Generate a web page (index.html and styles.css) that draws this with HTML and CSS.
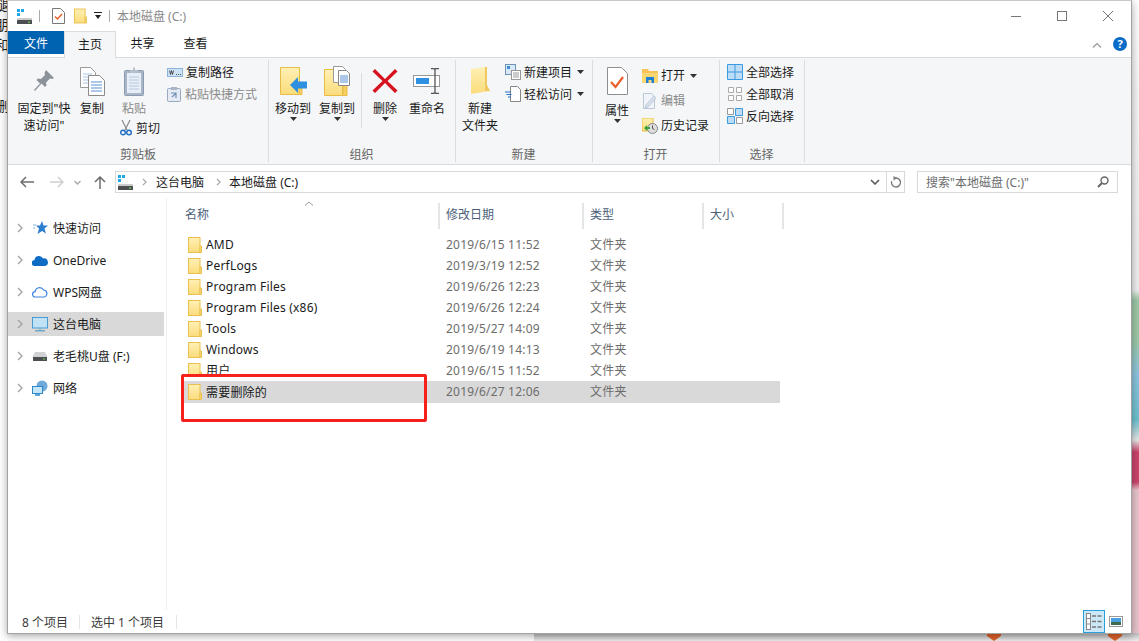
FILE: index.html
```html
<!DOCTYPE html>
<html lang="zh-CN">
<head>
    <meta charset="UTF-8">
    <title>本地磁盘 (C:)</title>
    <link rel="stylesheet" href="styles.css">
</head>
<body>
    <!-- shared icons -->
    <svg class="defs" width="0" height="0">
        <defs>
            <linearGradient id="fold" x1="0" y1="0" x2="0" y2="1">
                <stop offset="0" stop-color="#fff0b4"/>
                <stop offset="1" stop-color="#fbdc7c"/>
            </linearGradient>
            <symbol id="folder" viewBox="0 0 14 16">
                <rect x=".5" y=".5" width="11.5" height="15" fill="url(#fold)" stroke="#eac14f"/>
                <path d="M12 9h1.5v6.500H12z" fill="#fbe08a" stroke="#eac14f"/>
            </symbol>
            <symbol id="drive" viewBox="0 0 16 15">
                <path d="M1 0h3v3H1zM5 0h3v3H5zM1 4h3v3H1z" fill="#1ea7e8"/>
                <path d="M2 9h13l1 3v3H1v-3z" fill="#4b4f52"/>
                <path d="M2 9h13l.6 2H1.400z" fill="#c9cbcc"/>
                <path d="M12 12.500h2v1.200h-2z" fill="#6ed04c"/>
            </symbol>
            <symbol id="caret" viewBox="0 0 7 4">
                <path d="M0 0h7L3.500 4z" fill="#333"/>
            </symbol>
            <symbol id="chev" viewBox="0 0 6 10">
                <path d="M1 1l4 4-4 4" fill="none" stroke="#a6a6a6" stroke-width="1.500"/>
            </symbol>
        </defs>
    </svg>

    <!-- what shows behind the window -->
    <div class="behind-left">
        <span>腿</span>
        <span>朋</span>
        <span>和</span>
        <span class="low">删</span>
    </div>
    <div class="behind-right"></div>
    <div class="behind-bottom">
        <svg class="badge badge-a" width="14" height="8" viewBox="0 0 14 8"><path d="M0 0h14v3L7 8 0 3z" fill="#e0622a"/></svg>
        <svg class="badge badge-b" width="14" height="8" viewBox="0 0 14 8"><path d="M0 0h14v3L7 8 0 3z" fill="#e0622a"/></svg>
    </div>

    <div class="window">
        <!-- title bar -->
        <div class="titlebar">
            <svg class="t-drive" width="16" height="15"><use href="#drive"/></svg>
            <span class="t-sep"></span>
            <svg class="t-doc" width="13" height="16" viewBox="0 0 13 16">
                <path d="M.5.5h8l4 4v11H.5z" fill="#fff" stroke="#777"/>
                <path d="M3 8.500l2.500 2.500L10 6" fill="none" stroke="#e8602c" stroke-width="1.500"/>
            </svg>
            <svg class="t-folder" width="13" height="16"><use href="#folder"/></svg>
            <svg class="t-caret" width="8" height="8" viewBox="0 0 8 8">
                <path d="M0 0h8v1H0zM1 3h6L4 7z" fill="#222"/>
            </svg>
            <span class="t-sep t-sep2"></span>
            <span class="t-title">本地磁盘 (C:)</span>
            <div class="win-btns">
                <svg width="10" height="10" viewBox="0 0 10 10"><path d="M0 5.500h10" stroke="#777"/></svg>
                <svg width="10" height="10" viewBox="0 0 10 10"><rect x=".5" y=".5" width="9" height="9" fill="none" stroke="#777"/></svg>
                <svg width="10" height="10" viewBox="0 0 10 10"><path d="M0 0l10 10M10 0L0 10" stroke="#777"/></svg>
            </div>
        </div>

        <!-- tabs -->
        <div class="tabs">
            <div class="tab tab-file">文件</div>
            <div class="tab tab-on">主页</div>
            <div class="tab">共享</div>
            <div class="tab">查看</div>
            <svg class="collapse" width="10" height="6" viewBox="0 0 10 6"><path d="M1 5.500l4-4 4 4" fill="none" stroke="#999" stroke-width="1.200"/></svg>
            <div class="help">?</div>
        </div>

        <!-- ribbon -->
        <div class="ribbon">
            <div class="group g-clip">
                <div class="group-body">
                    <div class="big w-pin">
                        <div class="big-icon">
                            <svg width="22" height="24" viewBox="0 0 22 24"><path d="M13 1l8 8-2 1-2-.500-4 4 .5 3-1.500 1.500-3.500-3.500L2 22l-1-1 6-6.500L3.500 11 5 9.500l3 .5 4-4-.5-2z" fill="#8b929a"/></svg>
                        </div>
                        <span>固定到"快<br>速访问"</span>
                    </div>
                    <div class="big w-copy">
                        <div class="big-icon">
                            <svg width="25" height="29" viewBox="0 0 25 29">
                                <path d="M.5.500h10l5 5v15H.5z" fill="#fff" stroke="#9a9a9a"/>
                                <path d="M3 7h9M3 10h9M3 13h9M3 16h9" stroke="#a9c4e6"/>
                                <path d="M8.500 8.500h11l5 5v15h-16z" fill="#fff" stroke="#8a8a8a"/>
                                <path d="M11 15h11M11 18h11M11 21h11M11 24h11" stroke="#5b8fd6"/>
                            </svg>
                        </div>
                        <span>复制</span>
                    </div>
                    <div class="paste-col">
                        <div class="big w-paste muted">
                            <div class="big-icon">
                                <svg width="20" height="29" viewBox="0 0 20 29">
                                    <rect x=".5" y="3.500" width="19" height="25" rx="1" fill="#a9b6c8" stroke="#8c9ab0"/>
                                    <rect x="3" y="6" width="14" height="20" fill="#e8eef7"/>
                                    <path d="M5 10h10M5 13h10M5 16h10M5 19h10M5 22h10" stroke="#b8c8de"/>
                                    <path d="M6 6V3h3V.5h2V3h3v3z" fill="#b5bfcc"/>
                                </svg>
                            </div>
                            <span>粘贴</span>
                        </div>
                        <div class="small cut">
                            <svg width="12" height="16" viewBox="0 0 12 16">
                                <path d="M2 0l5 10M10 0L5 10" stroke="#8a8a8a" stroke-width="1.200"/>
                                <circle cx="3" cy="12.500" r="2.300" fill="none" stroke="#1f6fc4" stroke-width="1.400"/>
                                <circle cx="9" cy="12.500" r="2.300" fill="none" stroke="#1f6fc4" stroke-width="1.400"/>
                            </svg>
                            <span>剪切</span>
                        </div>
                    </div>
                    <div class="small-col col-clip">
                        <div class="small">
                            <svg width="16" height="9" viewBox="0 0 16 9"><rect x=".5" y=".5" width="15" height="8" fill="#cfe3f7" stroke="#8db4dc"/><path d="M2.500 2.500l1 4 1-4 1 4 1-4M9 6.500h1M11 6.500h1M13 6.500h1" fill="none" stroke="#333" stroke-width=".8"/></svg>
                            <span>复制路径</span>
                        </div>
                        <div class="small muted">
                            <svg width="14" height="16" viewBox="0 0 14 16"><rect x=".5" y="2.500" width="13" height="13" rx="1" fill="#e4ebf4" stroke="#9aa9bd"/><path d="M4 1h6v3H4z" fill="#aab6c6"/><path d="M5 12V7h5M5 7l4 4" fill="none" stroke="#6f8fb5" stroke-width="1.200" transform="rotate(90 7 9)"/></svg>
                            <span class="gap-wide">粘贴快捷方式</span>
                        </div>
                    </div>
                </div>
                <div class="group-label">剪贴板</div>
            </div>

            <div class="group g-org">
                <div class="group-body">
                    <div class="big w-move">
                        <div class="big-icon">
                            <svg width="27" height="28" viewBox="0 0 27 28">
                                <path d="M.5.500h19v27H.5z" fill="url(#fold)" stroke="#e8bd45"/>
                                <path d="M19 16h3v11.500h-3z" fill="#f5cf63" stroke="#e8bd45"/>
                                <path d="M10 18l8-8v4.500h9v7h-9V26z" fill="#2f8fe0"/>
                            </svg>
                        </div>
                        <span>移动到</span>
                        <svg class="drop" width="7" height="4"><use href="#caret"/></svg>
                    </div>
                    <div class="big w-move">
                        <div class="big-icon">
                            <svg width="26" height="30" viewBox="0 0 26 30">
                                <path d="M.5 3.500h18v26H.5z" fill="url(#fold)" stroke="#e8bd45"/>
                                <path d="M19 18h4v11.500h-4z" fill="#f5cf63" stroke="#e8bd45"/>
                                <path d="M9.500.5h9l3 3v13h-12z" fill="#fff" stroke="#999"/>
                                <path d="M14.500 4.500h8l3 3v12h-11z" fill="#fff" stroke="#888"/>
                                <path d="M16 10h8M16 12h8M16 14h8M16 16h8" stroke="#5b8fd6"/>
                            </svg>
                        </div>
                        <span>复制到</span>
                        <svg class="drop" width="7" height="4"><use href="#caret"/></svg>
                    </div>
                    <span class="inner-sep"></span>
                    <div class="big w-del">
                        <div class="big-icon">
                            <svg width="26" height="26" viewBox="0 0 26 26"><path d="M3 1l10 10L23 1l2.500 2.500-10 9.500 10 9.500L23 25 13 15 3 25 .5 22.500l10-9.500-10-9.500z" fill="#d5121e"/></svg>
                        </div>
                        <span>删除</span>
                        <svg class="drop" width="7" height="4"><use href="#caret"/></svg>
                    </div>
                    <div class="big w-ren">
                        <div class="big-icon">
                            <svg width="28" height="26" viewBox="0 0 28 26">
                                <rect x=".5" y="7.500" width="26" height="11" fill="#fff" stroke="#999"/>
                                <rect x="3" y="10" width="13" height="6" fill="#2f8fe0"/>
                                <path d="M18 .5h3l1 1 1-1h3M18 25.500h3l1-1 1 1h3M22 1.500v23" fill="none" stroke="#555" stroke-width="1.300"/>
                            </svg>
                        </div>
                        <span>重命名</span>
                    </div>
                </div>
                <div class="group-label">组织</div>
            </div>

            <div class="group g-new">
                <div class="group-body">
                    <div class="big w-newf">
                        <div class="big-icon">
                            <svg width="19" height="28" viewBox="0 0 19 28"><path d="M0 2l15-2v18l4 6-4 .5L0 27z" fill="url(#fold)"/><path d="M14 0h2v18l3 6h-5z" fill="#eec95f"/></svg>
                        </div>
                        <span>新建<br>文件夹</span>
                    </div>
                    <div class="small-col col-new">
                        <div class="small">
                            <svg width="16" height="16" viewBox="0 0 16 16"><rect x=".5" y=".5" width="10" height="10" fill="#d9e8f6" stroke="#6f93b5"/><rect x="2" y="2" width="3" height="3" fill="#3d8ed8"/><rect x="6.500" y="6.500" width="9" height="9" fill="#fff" stroke="#999"/><path d="M8 9h6M8 11h6M8 13h6" stroke="#9a9a9a"/></svg>
                            <span>新建项目</span>
                            <svg class="small-caret" width="7" height="4"><use href="#caret"/></svg>
                        </div>
                        <div class="small">
                            <svg width="16" height="16" viewBox="0 0 16 16"><path d="M5.500.5h7l3 3v12h-10z" fill="#fff" stroke="#888"/><path d="M0 6h6M1.500 8.500h5M3 11h3" stroke="#1f6fc4" stroke-width="1.100"/></svg>
                            <span>轻松访问</span>
                            <svg class="small-caret" width="7" height="4"><use href="#caret"/></svg>
                        </div>
                    </div>
                </div>
                <div class="group-label">新建</div>
            </div>

            <div class="group g-open">
                <div class="group-body">
                    <div class="big w-prop">
                        <div class="big-icon">
                            <svg width="21" height="28" viewBox="0 0 21 28"><path d="M.5.500h14l6 6v21H.5z" fill="#fff" stroke="#8e8e8e"/><path d="M4 15l4.500 5L16 10" fill="none" stroke="#e8602c" stroke-width="2.200"/></svg>
                        </div>
                        <span>属性</span>
                        <svg class="drop" width="7" height="4"><use href="#caret"/></svg>
                    </div>
                    <div class="small-col col-open">
                        <div class="small">
                            <svg width="16" height="14" viewBox="0 0 16 14"><path d="M0 0h6l1 2h9v12H0z" fill="#f7c35a"/><path d="M0 4h16v10H0z" fill="#fbd773"/><path d="M4 14V8h8v6h-2.500v-3h-3v3z" fill="#1f7fd4"/></svg>
                            <span>打开</span>
                            <svg class="small-caret" width="7" height="4"><use href="#caret"/></svg>
                        </div>
                        <div class="small muted">
                            <svg width="16" height="16" viewBox="0 0 16 16"><path d="M1.500.5h8l3 3v12h-11z" fill="#f1f4f9" stroke="#bcc8d8"/><path d="M4 12l8-9 2 2-8 9-3 1z" fill="#d7e1ee" stroke="#aebcd0" stroke-width=".7"/></svg>
                            <span>编辑</span>
                        </div>
                        <div class="small">
                            <svg width="16" height="16" viewBox="0 0 16 16"><path d="M0 0h11v13H0z" fill="url(#fold)" stroke="#e8bd45"/><circle cx="10.500" cy="10.500" r="5" fill="#ddd" stroke="#888"/><path d="M10.500 7.500v3l2 1" fill="none" stroke="#555"/><path d="M2 10l3-3v2h3v2H5v2z" fill="#3aa33a"/></svg>
                            <span>历史记录</span>
                        </div>
                    </div>
                </div>
                <div class="group-label">打开</div>
            </div>

            <div class="group g-sel">
                <div class="group-body">
                    <div class="small-col col-sel">
                        <div class="small">
                            <svg width="16" height="16" viewBox="0 0 16 16"><path d="M.5.5h15v15H.5z" fill="#bcdcf7" stroke="#3b9ae0"/><path d="M8 0v16M0 8h16" stroke="#3b9ae0"/></svg>
                            <span>全部选择</span>
                        </div>
                        <div class="small">
                            <svg width="14" height="14" viewBox="0 0 14 14"><path d="M.5.5h5v5h-5zM8.500.5h5v5h-5zM.5 8.500h5v5h-5zM8.500 8.500h5v5h-5z" fill="#fff" stroke="#aaa"/></svg>
                            <span>全部取消</span>
                        </div>
                        <div class="small">
                            <svg width="16" height="16" viewBox="0 0 16 16"><path d="M.5.5h6v6h-6zM9.500 9.500h6v6h-6z" fill="#fff" stroke="#999"/><path d="M8.500.5h7v7h-7zM.5 8.500h7v7h-7z" fill="#bcdcf7" stroke="#3b9ae0"/></svg>
                            <span>反向选择</span>
                        </div>
                    </div>
                </div>
                <div class="group-label">选择</div>
            </div>
        </div>

        <!-- address bar -->
        <div class="addressbar">
            <div class="nav-btns">
                <svg width="14" height="12" viewBox="0 0 14 12"><path d="M6 1L1 6l5 5M1 6h13" fill="none" stroke="#6d6d6d" stroke-width="1.500"/></svg>
                <svg width="14" height="12" viewBox="0 0 14 12"><path d="M8 1l5 5-5 5M13 6H0" fill="none" stroke="#cfcfcf" stroke-width="1.500"/></svg>
                <svg width="7" height="5" viewBox="0 0 7 5"><path d="M.5 1l3 3 3-3" fill="none" stroke="#a6a6a6" stroke-width="1.300"/></svg>
                <svg width="12" height="13" viewBox="0 0 12 13"><path d="M1 6l5-5 5 5M6 1v12" fill="none" stroke="#6d6d6d" stroke-width="1.500"/></svg>
            </div>
            <div class="address">
                <svg class="a-drive" width="16" height="15"><use href="#drive"/></svg>
                <svg class="a-chev" width="5" height="8"><use href="#chev"/></svg>
                <span>这台电脑</span>
                <svg class="a-chev" width="5" height="8"><use href="#chev"/></svg>
                <span>本地磁盘 (C:)</span>
                <svg class="a-down" width="10" height="6" viewBox="0 0 10 6"><path d="M1 1l4 4 4-4" fill="none" stroke="#555" stroke-width="1.500"/></svg>
                <div class="a-refresh">
                    <svg width="11" height="12" viewBox="0 0 11 12"><path d="M6 2a4.500 4.500 0 1 1-4.300 3.200" fill="none" stroke="#777" stroke-width="1.300"/><path d="M3.500 0L7 2 3.500 4.500z" fill="#777"/></svg>
                </div>
            </div>
            <div class="search">
                <span>搜索"本地磁盘 (C:)"</span>
                <svg width="12" height="12" viewBox="0 0 12 12"><circle cx="7.500" cy="4.500" r="3.500" fill="none" stroke="#666" stroke-width="1.400"/><path d="M5 7l-4 4" stroke="#666" stroke-width="2"/></svg>
            </div>
        </div>

        <!-- main -->
        <div class="main">
            <div class="navpane">
                <div class="nav-item">
                    <svg class="n-chev" width="6" height="10"><use href="#chev"/></svg>
                    <span class="n-icon"><svg width="15" height="14" viewBox="0 0 15 14"><path d="M9 0l1.500 4.500H15l-3.500 3 1.500 5L9 10l-4.500 3 1.500-5.500-3-3h4z" fill="#2f7fd0"/><path d="M0 4h3M0 7h2" stroke="#7fb2e6"/></svg></span>
                    <span>快速访问</span>
                </div>
                <div class="nav-item">
                    <svg class="n-chev" width="6" height="10"><use href="#chev"/></svg>
                    <span class="n-icon"><svg width="16" height="11" viewBox="0 0 16 11"><path d="M3 11a3 3 0 0 1-.5-6A4.500 4.500 0 0 1 11 3.500 3.800 3.800 0 0 1 13 11z" fill="#0f6cc4"/></svg></span>
                    <span>OneDrive</span>
                </div>
                <div class="nav-item">
                    <svg class="n-chev" width="6" height="10"><use href="#chev"/></svg>
                    <span class="n-icon"><svg width="16" height="12" viewBox="0 0 16 12"><path d="M3.500 11a2.700 2.700 0 0 1-.4-5.400A4.500 4.500 0 0 1 11.500 4 3.600 3.600 0 0 1 12.500 11z" fill="none" stroke="#3f83e0" stroke-width="1.200"/></svg></span>
                    <span>WPS网盘</span>
                </div>
                <div class="nav-item nav-on">
                    <svg class="n-chev" width="6" height="10"><use href="#chev"/></svg>
                    <span class="n-icon"><svg width="16" height="15" viewBox="0 0 16 15"><rect x=".5" y=".5" width="15" height="10.500" fill="#bfe2f7" stroke="#4a9bd1"/><path d="M3 13h10v1.500H3z" fill="#6fa8cc"/><path d="M7 11h2v2H7z" fill="#8fb8d2"/></svg></span>
                    <span>这台电脑</span>
                </div>
                <div class="nav-item">
                    <svg class="n-chev" width="6" height="10"><use href="#chev"/></svg>
                    <span class="n-icon"><svg width="14" height="9" viewBox="0 0 14 9"><path d="M2 0h10l2 4v5H0V4z" fill="#d0d2d3"/><path d="M0 5h14v4H0z" fill="#4b4f52"/><path d="M10 6.500h2v1h-2z" fill="#6ed04c"/></svg></span>
                    <span>老毛桃U盘 (F:)</span>
                </div>
                <div class="nav-item">
                    <svg class="n-chev" width="6" height="10"><use href="#chev"/></svg>
                    <span class="n-icon"><svg width="16" height="16" viewBox="0 0 16 16"><circle cx="10" cy="6" r="5.500" fill="#6fa9d8"/><rect x=".5" y="6.500" width="10" height="7" fill="#c6e6fa" stroke="#2f86c9"/><path d="M3 15h5" stroke="#2f86c9" stroke-width="1.500"/></svg></span>
                    <span>网络</span>
                </div>
            </div>

            <div class="files">
                <svg class="sort" width="10" height="5" viewBox="0 0 10 5"><path d="M1 4.500l4-3.500 4 3.500" fill="none" stroke="#999"/></svg>
                <div class="file-head">
                    <div>名称</div>
                    <div>修改日期</div>
                    <div>类型</div>
                    <div>大小</div>
                </div>
                <div class="file-row">
                    <div class="f-name"><svg width="14" height="16"><use href="#folder"/></svg>AMD</div>
                    <div>2019/6/15 11:52</div><div>文件夹</div>
                </div>
                <div class="file-row">
                    <div class="f-name"><svg width="14" height="16"><use href="#folder"/></svg>PerfLogs</div>
                    <div>2019/3/19 12:52</div><div>文件夹</div>
                </div>
                <div class="file-row">
                    <div class="f-name"><svg width="14" height="16"><use href="#folder"/></svg>Program Files</div>
                    <div>2019/6/26 12:23</div><div>文件夹</div>
                </div>
                <div class="file-row">
                    <div class="f-name"><svg width="14" height="16"><use href="#folder"/></svg>Program Files (x86)</div>
                    <div>2019/6/26 12:24</div><div>文件夹</div>
                </div>
                <div class="file-row">
                    <div class="f-name"><svg width="14" height="16"><use href="#folder"/></svg>Tools</div>
                    <div>2019/5/27 14:09</div><div>文件夹</div>
                </div>
                <div class="file-row">
                    <div class="f-name"><svg width="14" height="16"><use href="#folder"/></svg>Windows</div>
                    <div>2019/6/19 14:13</div><div>文件夹</div>
                </div>
                <div class="file-row">
                    <div class="f-name"><svg width="14" height="16"><use href="#folder"/></svg>用户</div>
                    <div>2019/6/15 11:52</div><div>文件夹</div>
                </div>
                <div class="file-row file-on">
                    <div class="f-name"><svg width="14" height="16"><use href="#folder"/></svg>需要删除的</div>
                    <div>2019/6/27 12:06</div><div>文件夹</div>
                </div>
                <!-- red mark someone drew on the screenshot -->
                <div class="redbox"></div>
            </div>
        </div>

        <!-- status bar -->
        <div class="statusbar">
            <span class="st-count">8 个项目</span>
            <span class="st-sep"></span>
            <span class="st-sel">选中 1 个项目</span>
            <span class="st-sep"></span>
            <div class="views">
                <div class="view view-on">
                    <svg width="16" height="17" viewBox="0 0 16 17"><rect x=".5" y=".5" width="4" height="16" fill="#fff" stroke="#888"/><path d="M1 5.500h3M1 11h3" stroke="#888"/><path d="M6 3h4M11.500 3h4M6 8.500h4M11.500 8.500h4M6 14h4M11.500 14h4" stroke="#777" stroke-width="1.300"/></svg>
                </div>
                <div class="view">
                    <svg width="14" height="11" viewBox="0 0 14 11"><rect x=".5" y=".5" width="13" height="10" fill="#fff" stroke="#999"/><rect x="2" y="2" width="10" height="4" fill="#4a9fe0"/><rect x="2" y="6" width="10" height="3" fill="#3d6b4e"/></svg>
                </div>
            </div>
        </div>
    </div>
</body>
</html>
```

FILE: styles.css
```css
html, body {
    margin: 0;
    height: 641px;
    overflow: hidden;
    background: #fff;
    font-family: "Noto Sans", "Noto Sans CJK SC", sans-serif;
    font-size: 12px;
    color: #1a1a1a;
}
svg { display: block; flex: none; }
.defs { position: absolute; }

/* stuff behind the window */
.behind-left {
    position: absolute;
    left: -5px;
    top: -6px;
    width: 13px;
    overflow: hidden;
    font-family: "Noto Sans CJK SC", sans-serif;
    font-size: 14px;
    line-height: 20px;
    color: #222;
}
.behind-left span { display: block; }
.behind-left .low { margin-top: 41px; }
.behind-right {
    position: absolute;
    left: 1131px;
    top: 0;
    width: 8px;
    height: 641px;
    background: linear-gradient(#fff 0, #f4f4f4 100px, #eee 290px, #9cc8a6 300px, #9cc8a6 340px, #8cc4e0 375px, #6cc0cc 420px, #e6e6e6 440px, #c9446a 452px, #c9446a 482px, #e8c4cc 490px, #e8c4cc 641px);
}
.behind-bottom {
    position: absolute;
    left: 534px;
    top: 633px;
    width: 605px;
    height: 8px;
    background: linear-gradient(#bdbdbd, #ececec);
}
.badge { position: absolute; top: 0; }
.badge-a { left: 453px; }
.badge-b { left: 574px; }

/* window */
.window {
    position: absolute;
    left: 7px;
    top: 0;
    width: 1123px;
    height: 632px;
    display: flex;
    flex-direction: column;
    background: #fff;
    border: 1px solid #a3a3a3;
    border-top-color: #c8c8c8;
    box-shadow: 0 2px 8px rgba(0, 0, 0, .35);
}

.titlebar {
    height: 30px;
    flex: none;
    display: flex;
    align-items: center;
    padding-left: 8px;
}
.t-sep {
    width: 1px;
    height: 12px;
    background: #aaa;
    margin-left: 7px;
}
.t-doc { margin-left: 12px; }
.t-folder { margin-left: 9px; }
.t-caret { margin-left: 7px; }
.t-sep2 { margin-left: 7px; }
.t-title {
    margin-left: 7px;
    color: #8a8a8a;
}
.win-btns {
    margin-left: auto;
    display: flex;
    gap: 36px;
    padding-right: 18px;
}

.tabs {
    height: 26px;
    flex: none;
    display: flex;
    position: relative;
}
.tab {
    width: 53px;
    height: 23px;
    line-height: 25px;
    text-align: center;
}
.tab-file {
    width: 56px;
    background: #0063b1;
    color: #fff;
}
.tab-on {
    width: 52px;
    height: 27px;
    margin-bottom: -1px;
    background: #f5f6f7;
    border: 1px solid #dadbdc;
    border-bottom: 0;
    box-sizing: border-box;
    position: relative;
    z-index: 1;
}
.collapse {
    position: absolute;
    left: 1084px;
    top: 11px;
}
.help {
    position: absolute;
    left: 1105px;
    top: 6px;
    width: 14px;
    height: 14px;
    border-radius: 50%;
    background: #0a6cc7;
    color: #fff;
    font-size: 11px;
    font-weight: bold;
    line-height: 14px;
    text-align: center;
}

/* ribbon */
.ribbon {
    height: 108px;
    flex: none;
    display: flex;
    box-sizing: border-box;
    background: #f5f6f7;
    border-top: 1px solid #dadbdc;
    border-bottom: 1px solid #dadbdc;
    line-height: 17px;
}
.group {
    height: 100%;
    display: flex;
    flex-direction: column;
    box-sizing: border-box;
    position: relative;
}
.group::after {
    content: "";
    position: absolute;
    right: -1px;
    top: 2px;
    bottom: 2px;
    width: 1px;
    background: #dcdddf;
}
.group-body {
    flex: 1;
    display: flex;
    padding-top: 4px;
}
.group-label {
    height: 18px;
    line-height: 18px;
    text-align: center;
    color: #666;
}
.g-clip { width: 260px; }
.g-clip .group-body { padding-left: 5px; }
.g-org { width: 187px; }
.g-org .group-body { padding-left: 4px; }
.g-new { width: 137px; }
.g-new .group-body { padding-left: 3px; }
.g-open { width: 127px; }
.g-open .group-body { padding-left: 5px; }
.g-sel { width: 85px; }
.g-sel .group-body { padding-left: 8px; }

.big {
    display: flex;
    flex-direction: column;
    align-items: center;
    text-align: center;
    white-space: nowrap;
}
.big-icon {
    height: 38px;
    display: flex;
    align-items: center;
    justify-content: center;
}
.muted { color: #8a8a8a; }
.w-pin { width: 62px; }
.w-copy { width: 34px; }
.w-paste { width: 50px; }
.w-move { width: 42px; margin-right: 2px; }
.w-del { width: 40px; }
.w-ren { width: 44px; }
.w-newf { width: 44px; }
.w-prop { width: 40px; }
.w-prop span { margin-top: 2px; }

.paste-col { width: 52px; }
.inner-sep {
    width: 1px;
    height: 55px;
    margin: 11px 3px 0 1px;
    background: #dcdddf;
}

.small-col {
    display: flex;
    flex-direction: column;
    margin-top: -1px;
}
.small {
    height: 22px;
    display: flex;
    align-items: center;
    gap: 3px;
    white-space: nowrap;
}
.small-caret { margin-left: 2px; }
.cut {
    margin-left: 11px;
    gap: 4px;
}
.gap-wide { margin-left: 1px; }
.col-clip { margin-left: 6px; }
.col-new { margin-left: 3px; }
.col-open {
    margin-left: 5px;
    margin-top: 1px;
}
.col-open .small { height: 25px; }
.col-sel .small:nth-child(2) svg { margin: 0 1px; }

/* address bar */
.addressbar {
    height: 33px;
    flex: none;
    display: flex;
    align-items: center;
    box-sizing: border-box;
    padding-top: 1px;
}
.nav-btns {
    width: 107px;
    display: flex;
    align-items: center;
    padding-left: 12px;
    box-sizing: border-box;
}
.nav-btns svg:nth-child(2) { margin-left: 16px; }
.nav-btns svg:nth-child(3) { margin-left: 10px; }
.nav-btns svg:nth-child(4) { margin-left: 13px; }
.address {
    width: 790px;
    height: 22px;
    display: flex;
    align-items: center;
    box-sizing: border-box;
    border: 1px solid #d9d9d9;
}
.a-drive { margin-left: 1px; }
.a-chev { margin: 0 9px; }
.address span + .a-chev { margin: 0 8px 0 12px; }
.a-down { margin-left: auto; margin-right: 6px; }
.a-refresh {
    width: 17px;
    height: 100%;
    display: flex;
    align-items: center;
    justify-content: center;
    border-left: 1px solid #d9d9d9;
}
.search {
    width: 201px;
    height: 22px;
    margin-left: 12px;
    display: flex;
    align-items: center;
    justify-content: space-between;
    box-sizing: border-box;
    border: 1px solid #d9d9d9;
    padding: 0 8px;
    color: #6d6d6d;
}

/* main area */
.main {
    flex: 1;
    display: flex;
    min-height: 0;
}
.navpane {
    width: 156px;
    flex: none;
    padding-top: 18px;
    padding-right: 2px;
    border-right: 1px solid #eee;
    margin-right: 14px;
}
.nav-item {
    height: 24px;
    margin-bottom: 8px;
    display: flex;
    align-items: center;
    white-space: nowrap;
}
.nav-on { background: #d9d9d9; }
.n-chev { margin-left: 9px; }
.n-icon {
    width: 16px;
    margin: 0 5px 0 9px;
    display: flex;
    justify-content: center;
}

.files {
    flex: 1;
    position: relative;
}
.sort {
    position: absolute;
    left: 123px;
    top: 3px;
}
.file-head, .file-row {
    display: grid;
    grid-template-columns: 258px 144px 120px 77px;
    width: 599px;
}
.file-head {
    height: 26px;
    margin-top: 5px;
    margin-bottom: 5px;
    grid-template-columns: 259px 144px 120px 80px;
    width: 603px;
    line-height: 24px;
    color: #4c607a;
}
.file-head div {
    box-sizing: border-box;
    padding-left: 6px;
    border-right: 2px solid #e5e5e5;
}
.file-head div:first-child {
    padding-left: 4px;
}
.file-row {
    height: 21px;
    line-height: 21px;
    color: #6d6d6d;
    letter-spacing: .2px;
}
.file-row div { padding-left: 7px; }
.file-row .f-name {
    display: flex;
    align-items: center;
    gap: 4px;
    color: #1a1a1a;
    white-space: nowrap;
}
.file-on {
    background: #d9d9d9;
    height: 22px;
}
.redbox {
    position: absolute;
    left: 0;
    top: 176px;
    width: 246px;
    height: 48px;
    box-sizing: border-box;
    border: 3px solid #f5211a;
    border-radius: 2px;
}
.redbox::before {
    content: "";
    position: absolute;
    left: 0;
    right: 0;
    top: 0;
    height: 4px;
    background: #fff;
}

/* status bar */
.statusbar {
    height: 23px;
    flex: none;
    display: flex;
    align-items: center;
    padding-left: 14px;
}
.st-sep {
    width: 1px;
    height: 14px;
    background: #e5e5e5;
}
.st-count { width: 57px; }
.st-sel { margin-left: 11px; width: 85px; }
.st-count, .st-sel { color: #3b3b3b; white-space: nowrap; }
.views {
    margin-left: auto;
    margin-right: 8px;
    display: flex;
    align-items: center;
    gap: 4px;
    height: 100%;
}
.view {
    width: 22px;
    height: 100%;
    display: flex;
    align-items: center;
    justify-content: center;
    box-sizing: border-box;
}
.view + .view { width: 14px; }
.view-on {
    background: #cce8f7;
    border: 1px solid #26a0da;
}
```
